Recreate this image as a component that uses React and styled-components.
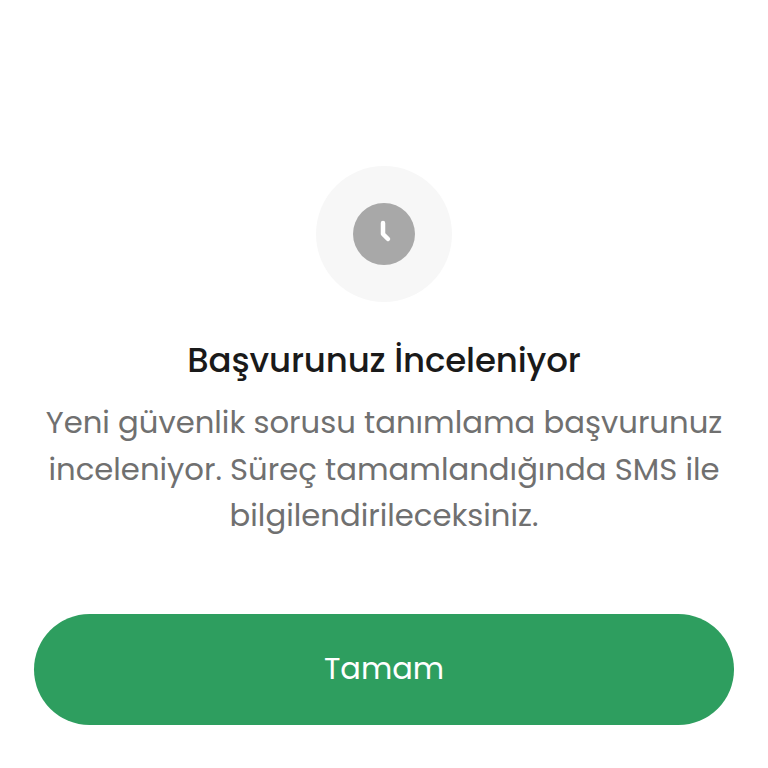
import React from 'react';
import styled, { createGlobalStyle } from 'styled-components';

const GlobalStyle = createGlobalStyle`
  html, body {
    margin: 0;
    padding: 0;
    background: #ffffff;
  }
`;

const Page = styled.div`
  width: 768px;
  height: 768px;
  box-sizing: border-box;
  padding: 166px 34px 0;
  display: flex;
  flex-direction: column;
  align-items: center;
  overflow: hidden;
  font-family: "Poppins", "Inter", "Noto Sans", sans-serif;
`;

const IconCircle = styled.div`
  width: 136px;
  height: 136px;
  border-radius: 50%;
  background: #f7f7f7;
  display: flex;
  align-items: center;
  justify-content: center;
`;

const Title = styled.h1`
  margin: 36px 0 0;
  font-size: 34px;
  line-height: 44px;
  font-weight: 500;
  color: #1a1a1a;
  letter-spacing: -0.13px;
`;

const Message = styled.p`
  margin: 18px 0 0;
  font-size: 30.7px;
  line-height: 46.5px;
  font-weight: 400;
  color: #707070;
  text-align: center;
  white-space: nowrap;
`;

const Button = styled.button`
  margin-top: 74px;
  width: 700px;
  height: 111px;
  flex-shrink: 0;
  border: 0;
  border-radius: 56px;
  background: #2e9e5f;
  color: #ffffff;
  font-family: inherit;
  font-size: 30.4px;
`;

function ClockIcon() {
  return (
    <svg width="62" height="62" viewBox="0 0 62 62">
      <circle cx="31" cy="31" r="31" fill="#a8a8a8" />
      <path d="M30 20v11l5 5" fill="none" stroke="#fff" strokeWidth="4.5" strokeLinecap="round" strokeLinejoin="round" />
    </svg>
  );
}

export default function App() {
  return (
    <Page>
      <GlobalStyle />
      <IconCircle>
        <ClockIcon />
      </IconCircle>
      <Title>Başvurunuz İnceleniyor</Title>
      <Message>
        Yeni güvenlik sorusu tanımlama başvurunuz<br />
        inceleniyor. Süreç tamamlandığında SMS ile<br />
        bilgilendirileceksiniz.
      </Message>
      <Button>Tamam</Button>
    </Page>
  );
}
